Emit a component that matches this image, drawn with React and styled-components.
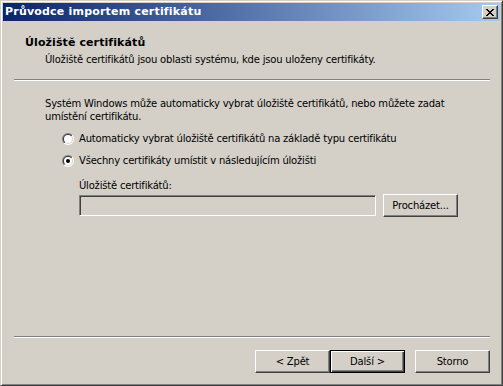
import React from "react";
import styled, { createGlobalStyle, css } from "styled-components";

const Global = createGlobalStyle`
  html, body { margin: 0; padding: 0; background: #d4d0c8; }
  * { box-sizing: border-box; }
`;

const FONT = `"DejaVu Sans", "Liberation Sans", sans-serif`;

const Window = styled.div`
  width: 503px;
  height: 386px;
  border: 1px solid;
  border-color: #d4d0c8 #404040 #404040 #d4d0c8;
  box-shadow: inset 1px 1px #fff, inset -1px -1px #808080;
  padding: 2px;
  background: #d4d0c8;
  display: flex;
  flex-direction: column;
  font-family: ${FONT};
  font-size: 10px;
  letter-spacing: -0.2px;
  color: #000;
`;

const TitleBar = styled.div`
  height: 18px;
  flex: none;
  background: linear-gradient(to right, #0a246a, #a6caf0);
  display: flex;
  align-items: center;
  justify-content: space-between;
  padding: 0 2px 0 2px;
`;

const TitleText = styled.span`
  color: #fff;
  font-weight: bold;
  font-size: 11px;
  letter-spacing: 0.2px;
  line-height: 18px;
`;

const bevel = css`
  background: #d4d0c8;
  border: 1px solid;
  border-color: #fff #404040 #404040 #fff;
  box-shadow: inset -1px -1px #808080, inset 1px 1px #d4d0c8;
`;

const CloseButton = styled.div`
  ${bevel};
  width: 16px;
  height: 14px;
  display: flex;
  align-items: center;
  justify-content: center;
`;

const Header = styled.div`
  height: 58px;
  flex: none;
  padding: 15px 0 0 22px;
`;

const HeaderTitle = styled.div`
  font-weight: bold;
  font-size: 11px;
  letter-spacing: 0.1px;
  line-height: 13px;
`;

const HeaderSub = styled.div`
  line-height: 13px;
  margin: 4px 0 0 20px;
`;

const Separator = styled.div`
  height: 2px;
  flex: none;
  border-top: 1px solid #808080;
  border-bottom: 1px solid #fff;
  margin: 0 10px 0 11px;
`;

const Body = styled.div`
  flex: 1;
  padding: 16px 0 0 42px;
`;

const Para = styled.p`
  margin: 0;
  line-height: 13px;
  width: 410px;
`;

const Options = styled.div`
  display: flex;
  flex-direction: column;
  gap: 9px;
  margin: 9px 0 0 17px;
`;

const RadioRow = styled.label`
  display: flex;
  align-items: center;
  gap: 5px;
  line-height: 13px;
`;

const StoreBlock = styled.div`
  margin: 12px 0 0 34px;
`;

const FieldLabel = styled.div`
  line-height: 13px;
`;

const FieldRow = styled.div`
  display: flex;
  align-items: center;
  gap: 7px;
  margin-top: 2px;
`;

const TextBox = styled.div`
  width: 297px;
  height: 21px;
  background: #d4d0c8;
  border: 1px solid;
  border-color: #808080 #fff #fff #808080;
  box-shadow: inset 1px 1px #404040, inset -1px -1px #d4d0c8;
`;

const Button = styled.button`
  ${bevel};
  width: 75px;
  height: 23px;
  padding: 0;
  font-family: ${FONT};
  font-size: 10px;
  letter-spacing: -0.2px;
  color: #000;
  line-height: 13px;
  ${(p) =>
    p.$default &&
    css`
      border-color: #000;
      box-shadow: inset 1px 1px #fff, inset -1px -1px #404040,
        inset -2px -2px #808080;
    `}
  ${(p) => p.$gap && css`margin-left: ${p.$gap}px;`}
`;

const Footer = styled.div`
  flex: none;
  display: flex;
  flex-direction: column;
`;

const ButtonRow = styled.div`
  display: flex;
  justify-content: flex-end;
  padding: 12px 10px 10px 0;
`;

const Radio = ({ checked }) => (
  <svg width="12" height="12" viewBox="0 0 12 12" style={{ flex: "none" }}>
    <defs>
      <linearGradient id="ro" x1="0" y1="0" x2="1" y2="1">
        <stop offset="0.5" stopColor="#808080" />
        <stop offset="0.5" stopColor="#ffffff" />
      </linearGradient>
      <linearGradient id="ri" x1="0" y1="0" x2="1" y2="1">
        <stop offset="0.5" stopColor="#404040" />
        <stop offset="0.5" stopColor="#d4d0c8" />
      </linearGradient>
    </defs>
    <circle cx="6" cy="6" r="6" fill="url(#ro)" />
    <circle cx="6" cy="6" r="5" fill="url(#ri)" />
    <circle cx="6" cy="6" r="4" fill="#fff" />
    {checked && <circle cx="6" cy="6" r="2" fill="#000" />}
  </svg>
);

export default function App() {
  return (
    <>
      <Global />
      <Window>
        <TitleBar>
          <TitleText>Průvodce importem certifikátu</TitleText>
          <CloseButton>
            <svg width="8" height="7" viewBox="0 0 8 7" shapeRendering="crispEdges">
              <path
                d="M0 0h2v1h-2zM6 0h2v1h-2zM1 1h2v1h-2zM5 1h2v1h-2zM2 2h4v1h-4zM3 3h2v1h-2zM2 4h4v1h-4zM1 5h2v1h-2zM5 5h2v1h-2zM0 6h2v1h-2zM6 6h2v1h-2z"
                fill="#000"
              />
            </svg>
          </CloseButton>
        </TitleBar>
        <Header>
          <HeaderTitle>Úložiště certifikátů</HeaderTitle>
          <HeaderSub>
            Úložiště certifikátů jsou oblasti systému, kde jsou uloženy certifikáty.
          </HeaderSub>
        </Header>
        <Separator />
        <Body>
          <Para>
            Systém Windows může automaticky vybrat úložiště certifikátů, nebo můžete zadat
            umístění certifikátu.
          </Para>
          <Options>
            <RadioRow>
              <Radio />
              Automaticky vybrat úložiště certifikátů na základě typu certifikátu
            </RadioRow>
            <RadioRow>
              <Radio checked />
              Všechny certifikáty umístit v následujícím úložišti
            </RadioRow>
          </Options>
          <StoreBlock>
            <FieldLabel>Úložiště certifikátů:</FieldLabel>
            <FieldRow>
              <TextBox />
              <Button>Procházet...</Button>
            </FieldRow>
          </StoreBlock>
        </Body>
        <Footer>
          <Separator />
          <ButtonRow>
            <Button>&lt; Zpět</Button>
            <Button $default>Další &gt;</Button>
            <Button $gap={10}>Storno</Button>
          </ButtonRow>
        </Footer>
      </Window>
    </>
  );
}
